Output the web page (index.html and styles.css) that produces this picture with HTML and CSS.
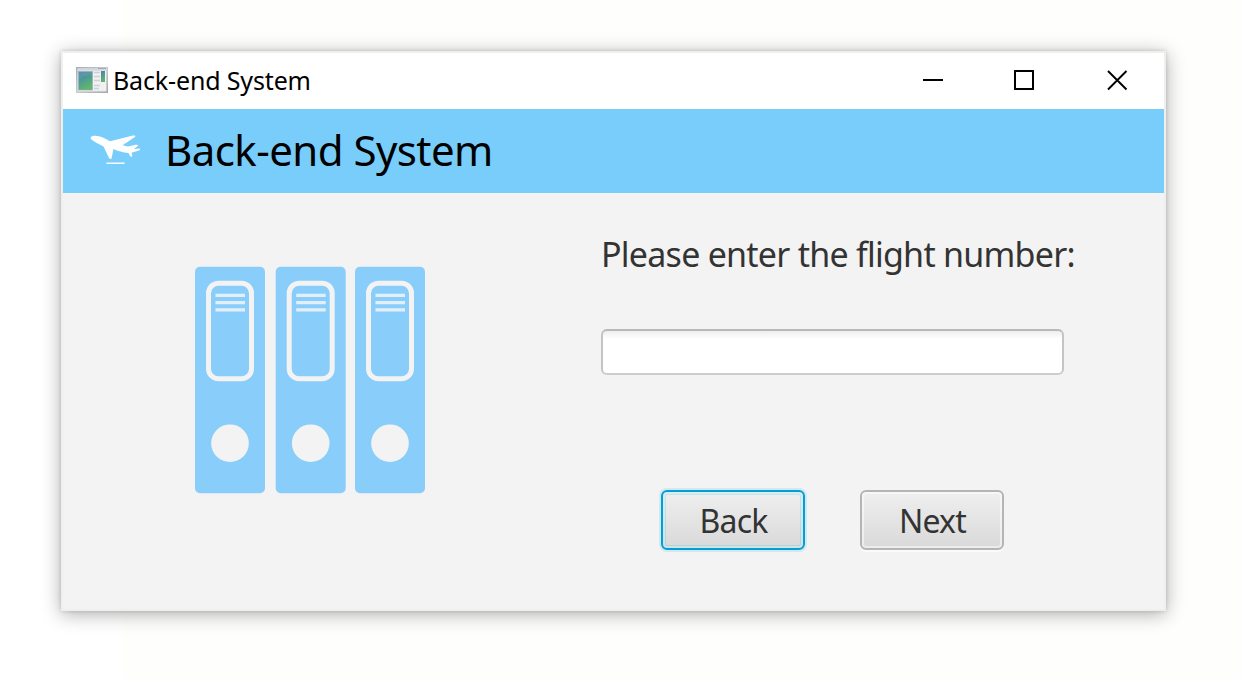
FILE: index.html
```
<!DOCTYPE html>
<html lang="en">
<head>
<meta charset="utf-8">
<title>Back-end System</title>
<link rel="stylesheet" href="styles.css">
</head>
<body>
<main class="window">
  <header class="titlebar">
    <svg class="app-icon" width="32" height="26" viewBox="0 0 32 26">
      <defs>
        <linearGradient id="frame" x1="0" y1="0" x2="1" y2="1"><stop offset="0" stop-color="#a9aeb6"/><stop offset=".5" stop-color="#c9cbd0"/><stop offset="1" stop-color="#a5a7ab"/></linearGradient>
        <linearGradient id="pane" x1="0" y1="0" x2="0.4" y2="1"><stop offset="0" stop-color="#4a7fa8"/><stop offset=".5" stop-color="#4e9b92"/><stop offset="1" stop-color="#62b56c"/></linearGradient>
      </defs>
      <rect x=".75" y=".75" width="30.500" height="24.500" fill="#e3e4e7" stroke="url(#frame)" stroke-width="1.500"/>
      <rect x="1.500" y="1.500" width="29" height="2" fill="#d3d6dd"/>
      <path d="M22 1.500h8" stroke="#a4a9b4"/>
      <rect x="2" y="4" width="28" height="19.500" fill="#f1f1f2"/>
      <rect x="2.500" y="4.500" width="14" height="18.500" fill="url(#pane)" stroke="#8eb0b8" stroke-width=".6"/>
      <path d="M3 12Q8 8 16 8V5H3Z" fill="#7fa9c8" opacity=".3"/>
      <path d="M18 5.500h6M18 9.500h6M18 13.500h6M18 18.500h6M18 21.500h5" stroke="#cfd0d3" stroke-width="1.600"/>
      <rect x="25" y="4" width="4" height="11" fill="url(#pane)"/>
    </svg>
    <span class="title">Back-end System</span>
    <svg class="controls" width="206" height="22" viewBox="0 0 206 22" fill="none" stroke="#000" stroke-width="2">
      <path d="M0 11h20"/>
      <rect x="92" y="2" width="18" height="18"/>
      <path d="M185 2l18.500 18.500M203.500 2L185 20.500" stroke-width="1.900"/>
    </svg>
  </header>
  <section class="banner">
    <svg class="plane" width="52" height="32" viewBox="0 0 52 32" fill="#fff">
      <path d="M1 4C2 2.500 6 2.500 10 3.500C14 4.700 17 6.500 20 8.300L42 2.800C44.500 2.300 46 2.800 45 4L32.500 12.200L38 13.500L45.500 11.800C48 11.300 49 12.300 47.500 13.300L43.800 16L49.500 15.500C50.500 16 50.500 17 49 17.500L41.500 19.700L42.300 22.500C42 24.300 40.500 24.300 39.800 22.500L38.500 20C33 19.500 27.500 18 23.500 16L21.700 24.500C21.500 26.500 20 26.500 19 25L13.500 13.500C9 11.500 4 8.500 1.500 6.500C.5 5.700 .5 4.700 1 4Z"/>
      <rect x="16.500" y="29.500" width="18" height="1.500"/>
    </svg>
    <h1 class="heading">Back-end System</h1>
  </section>
  <section class="content">
    <svg class="folders" width="230" height="228" viewBox="0 0 230 228">
      <defs>
        <g id="folder">
          <rect width="70" height="226.500" rx="5" fill="#89cefb"/>
          <rect x="13.500" y="16.500" width="43" height="95.500" rx="10" fill="none" stroke="#f3f3f3" stroke-width="5"/>
          <path d="M20.500 28.700h29.500M20.500 36h29.500M20.500 43.200h29.500" stroke="#e3eff7" stroke-width="3.300"/>
          <circle cx="35" cy="176.500" r="18.800" fill="#f3f3f3"/>
        </g>
      </defs>
      <use href="#folder" y=".7"/>
      <use href="#folder" x="80.700" y=".7"/>
      <use href="#folder" x="160" y=".7"/>
    </svg>
    <form class="form">
      <label class="label" for="flight">Please enter the flight number:</label>
      <input class="field" id="flight" type="text">
      <div class="actions">
        <button class="button focused" type="button">Back</button>
        <button class="button" type="button">Next</button>
      </div>
    </form>
  </section>
</main>
</body>
</html>
```
FILE: styles.css
```
* { box-sizing: border-box; }

body {
  margin: 0;
  height: 680px;
  padding: 51px 76px 69px 61px;
  overflow: hidden;
  background: linear-gradient(90deg, #fff 120px, #fefefc 124px);
  font-family: "Noto Sans", "Open Sans", sans-serif;
}

.window {
  width: 1105px;
  height: 560px;
  border: 2px solid #efefee;
  background: #f3f3f3;
  box-shadow: 0 3px 18px rgba(0, 0, 0, .32), 0 0 4px rgba(0, 0, 0, .15);
}

.titlebar {
  display: flex;
  align-items: center;
  height: 56px;
  padding: 0 35px 0 13px;
  background: #fff;
}

.app-icon { margin-top: -2px; }

.title {
  margin: -3px 0 0 5px;
  font-size: 25px;
  line-height: 32px;
  letter-spacing: -.15px;
  white-space: nowrap;
  color: #000;
}

.controls { margin: -2px 0 0 auto; }

.banner {
  display: flex;
  align-items: center;
  height: 84px;
  padding-left: 27px;
  background: #78cdfb;
}

.plane { margin-top: -5px; }

.heading {
  margin: -2px 0 0 23px;
  font-size: 42px;
  font-weight: 400;
  line-height: 60px;
  letter-spacing: -.55px;
  white-space: nowrap;
  color: #000;
}

.content {
  display: flex;
  gap: 176px;
  padding-left: 132px;
}

.folders { flex: none; margin-top: 73px; }

.form {
  display: flex;
  flex-direction: column;
  padding-top: 37px;
}

.label {
  font-size: 34px;
  line-height: 48px;
  letter-spacing: -.75px;
  white-space: nowrap;
  color: #333;
}

.field {
  width: 463px;
  height: 46px;
  margin-top: 51px;
  border: 2px solid;
  border-color: #b8b8b8 #c4c4c4 #cdcdcd;
  border-radius: 6px;
  outline: none;
  background: linear-gradient(#eee, #fff 8px);
}

.actions {
  display: flex;
  gap: 55px;
  margin: 115px 0 0 60px;
}

.button {
  width: 144px;
  height: 60px;
  padding: 1px 0 0 1px;
  border: 2px solid #b5b5b5;
  border-radius: 6px;
  background: linear-gradient(#efefef, #d9d9d9);
  box-shadow: inset 0 0 0 2px rgba(255, 255, 255, .5), 0 2px 0 #fbfbfb;
  font-family: inherit;
  font-size: 32px;
  line-height: 44px;
  letter-spacing: -.8px;
  color: #333;
}

.focused {
  border-color: #039ed3;
  box-shadow: inset 0 0 0 2px rgba(225, 247, 252, .5), inset 0 0 0 3px rgba(3, 158, 211, .15), 0 0 0 2px #d3e8f0;
}
```
